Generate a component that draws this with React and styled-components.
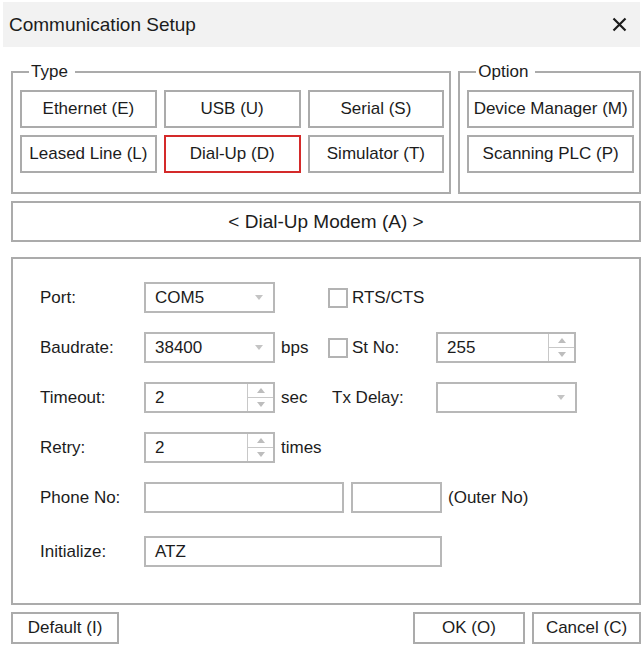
import { createGlobalStyle, styled } from "styled-components";

const GlobalStyle = createGlobalStyle`
  html, body {
    margin: 0;
    padding: 0;
    background: #fff;
  }
  body {
    font-family: "Liberation Sans", Arial, sans-serif;
    color: #1c1c1c;
  }
`;

function CloseIcon() {
  return (
    <svg width="15" height="15" viewBox="0 0 15 15">
      <path d="M1.5 1.5 L13.5 13.5 M13.5 1.5 L1.5 13.5" stroke="#1c1c1c" strokeWidth="2.2" />
    </svg>
  );
}

function Select({ value, width }) {
  return (
    <Field $width={width}>
      <FieldText>{value}</FieldText>
      <DropArrow />
    </Field>
  );
}

function Spinner({ value, width }) {
  return (
    <Field $width={width}>
      <FieldText>{value}</FieldText>
      <Spin>
        <SpinHalf>
          <Tri $up />
        </SpinHalf>
        <SpinHalf>
          <Tri />
        </SpinHalf>
      </Spin>
    </Field>
  );
}

function App() {
  return (
    <>
      <GlobalStyle />
      <Window>
        <TitleBar>
          <Title>Communication Setup</Title>
          <CloseIcon />
        </TitleBar>
        <Body>
          <TopRow>
            <Group $width={441}>
              <Legend>Type</Legend>
              <ButtonGrid $cols={3}>
                <TypeButton>Ethernet (E)</TypeButton>
                <TypeButton>USB (U)</TypeButton>
                <TypeButton>Serial (S)</TypeButton>
                <TypeButton>Leased Line (L)</TypeButton>
                <TypeButton $active>Dial-Up (D)</TypeButton>
                <TypeButton>Simulator (T)</TypeButton>
              </ButtonGrid>
            </Group>
            <Group $width={183}>
              <Legend>Option</Legend>
              <ButtonGrid $cols={1}>
                <TypeButton>Device Manager (M)</TypeButton>
                <TypeButton>Scanning PLC (P)</TypeButton>
              </ButtonGrid>
            </Group>
          </TopRow>

          <ModemBar>&lt; Dial-Up Modem (A) &gt;</ModemBar>

          <FormBox>
            <Form>
              <Label>Port:</Label>
              <Select value="COM5" width={131} />
              <span />
              <CheckLabel>
                <Check />
                RTS/CTS
              </CheckLabel>
              <span />

              <Label>Baudrate:</Label>
              <Select value="38400" width={131} />
              <Unit>bps</Unit>
              <CheckLabel>
                <Check />
                St No:
              </CheckLabel>
              <Spinner value="255" width={140} />

              <Label>Timeout:</Label>
              <Spinner value="2" width={131} />
              <Unit>sec</Unit>
              <SideLabel>Tx Delay:</SideLabel>
              <Select value="" width={141} />

              <Label>Retry:</Label>
              <Spinner value="2" width={131} />
              <Unit>times</Unit>
              <span />
              <span />

              <Label>Phone No:</Label>
              <Wide>
                <Field $width={200} />
                <Field $width={91} />
                <Unit>(Outer No)</Unit>
              </Wide>

              <Label $last>Initialize:</Label>
              <Wide $last>
                <Field $width={298}>
                  <FieldText>ATZ</FieldText>
                </Field>
              </Wide>
            </Form>
          </FormBox>

          <Footer>
            <FootButton $width={108}>Default (I)</FootButton>
            <Spacer />
            <FootButton $width={112}>OK (O)</FootButton>
            <FootButton $width={109}>Cancel (C)</FootButton>
          </Footer>
        </Body>
      </Window>
    </>
  );
}

const Window = styled.div`
  width: 643px;
  height: 650px;
  overflow: hidden;
  padding-top: 2px;
  box-sizing: border-box;
`;

const TitleBar = styled.div`
  height: 45px;
  margin: 0 3px;
  background: #f2f2f2;
  display: flex;
  align-items: center;
  justify-content: space-between;
  padding: 0 13px 0 6px;
`;

const Title = styled.div`
  font-size: 19px;
`;

const Body = styled.div`
  padding: 15px 2px 0 11px;
`;

const TopRow = styled.div`
  display: flex;
  gap: 7px;
  align-items: stretch;
`;

const Group = styled.fieldset`
  width: ${(p) => p.$width}px;
  box-sizing: border-box;
  margin: 0;
  padding: 8px 5px 19px 7px;
  border: 2px solid #ababab;
  min-width: 0;
`;

const Legend = styled.legend`
  font-size: 17px;
  padding: 0 7px 0 2px;
  margin-left: 9px;
  line-height: 20px;
`;

const ButtonGrid = styled.div`
  display: grid;
  grid-template-columns: repeat(${(p) => p.$cols}, 1fr);
  grid-auto-rows: 38px;
  gap: 7px 7px;
`;

const TypeButton = styled.div`
  box-sizing: border-box;
  border: 2px solid ${(p) => (p.$active ? "#d42a2a" : "#ababab")};
  display: flex;
  align-items: center;
  justify-content: center;
  font-size: 17px;
  white-space: nowrap;
`;

const ModemBar = styled.div`
  margin-top: 7px;
  height: 41px;
  box-sizing: border-box;
  border: 2px solid #ababab;
  display: flex;
  align-items: center;
  justify-content: center;
  font-size: 19px;
`;

const FormBox = styled.div`
  margin-top: 15px;
  height: 348px;
  box-sizing: border-box;
  border: 2px solid #ababab;
  padding: 23px 0 0 27px;
`;

const Form = styled.div`
  display: grid;
  grid-template-columns: 104px 131px 53px 108px 141px;
  grid-auto-rows: 31px;
  row-gap: 19px;
  align-items: center;
  font-size: 17px;
`;

const Label = styled.div`
  white-space: nowrap;
  ${(p) => p.$last && "margin-top: 8px;"}
`;

const Unit = styled.div`
  padding-left: 6px;
  white-space: nowrap;
`;

const SideLabel = styled.div`
  padding-left: 4px;
  white-space: nowrap;
`;

const CheckLabel = styled.div`
  display: flex;
  align-items: center;
  gap: 4px;
  white-space: nowrap;
`;

const Check = styled.span`
  width: 20px;
  height: 20px;
  box-sizing: border-box;
  border: 2px solid #b3b3b3;
  background: #fff;
`;

const Wide = styled.div`
  grid-column: 2 / 6;
  display: flex;
  align-items: center;
  gap: 7px;
  ${(p) => p.$last && "margin-top: 8px;"}

  ${Unit} {
    padding-left: 0;
    margin-left: -1px;
  }
`;

const Field = styled.div`
  width: ${(p) => p.$width}px;
  height: 31px;
  box-sizing: border-box;
  border: 2px solid #b8b8b8;
  display: flex;
  align-items: center;
  background: #fff;
`;

const FieldText = styled.span`
  padding-left: 9px;
  flex: 1;
`;

const DropArrow = styled.span`
  width: 0;
  height: 0;
  margin-right: 10px;
  border-left: 4px solid transparent;
  border-right: 4px solid transparent;
  border-top: 5px solid #c4c4c4;
`;

const Spin = styled.div`
  width: 25px;
  align-self: stretch;
  border-left: 1px solid #c8c8c8;
  display: flex;
  flex-direction: column;
`;

const SpinHalf = styled.div`
  flex: 1;
  display: flex;
  align-items: center;
  justify-content: center;

  & + & {
    border-top: 1px solid #c8c8c8;
  }
`;

const Tri = styled.span`
  width: 0;
  height: 0;
  border-left: 4px solid transparent;
  border-right: 4px solid transparent;
  ${(p) =>
    p.$up ? "border-bottom: 5px solid #bdbdbd;" : "border-top: 5px solid #bdbdbd;"}
`;

const Footer = styled.div`
  margin-top: 7px;
  display: flex;
  gap: 7px;
`;

const Spacer = styled.div`
  flex: 1;
`;

const FootButton = styled.div`
  width: ${(p) => p.$width}px;
  height: 32px;
  box-sizing: border-box;
  border: 2px solid #ababab;
  display: flex;
  align-items: center;
  justify-content: center;
  font-size: 17px;
`;

export default App;
